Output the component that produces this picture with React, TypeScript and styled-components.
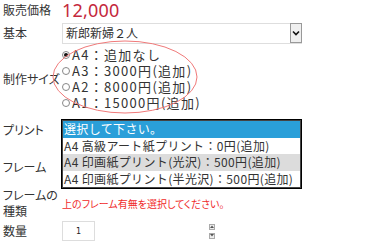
import styled, { createGlobalStyle } from "styled-components";

const GlobalStyle = createGlobalStyle`
  html, body {
    margin: 0;
    padding: 0;
    background: #fff;
  }
  body {
    font-family: "Noto Sans CJK JP", "Noto Sans", sans-serif;
    color: #333;
    font-size: 12px;
  }
`;

const Page = styled.div`
  position: relative;
  width: 376px;
  height: 241px;
  overflow: hidden;
  padding-left: 3px;
  box-sizing: border-box;
`;

const Row = styled.div<{ $h: number }>`
  display: grid;
  grid-template-columns: 59px 1fr;
  align-items: center;
  height: ${(p) => p.$h}px;
`;

const Label = styled.div`
  font-size: 12px;
  line-height: 16px;
  color: #333;
  white-space: nowrap;
  font-feature-settings: "palt";
`;

const Price = styled.div`
  font-family: "Noto Sans", sans-serif;
  font-size: 18px;
  line-height: 20px;
  color: #c4283c;
  letter-spacing: 0.2px;
`;

const SelectBox = styled.div<{ $w: number }>`
  position: relative;
  display: flex;
  align-items: center;
  width: ${(p) => p.$w}px;
  height: 21px;
  box-sizing: border-box;
  border: 1px solid #dedede;
  background: #fff;
  padding-left: 3px;
  font-size: 12px;
`;

const SelectText = styled.span`
  flex: 1;
  line-height: 16px;
`;

const ArrowButton = styled.span`
  display: flex;
  align-items: center;
  justify-content: center;
  width: 12px;
  height: 20px;
  margin-right: -1px;
  box-sizing: border-box;
  border: 1px solid #999;
  background: #efefef;
`;

const RadioList = styled.div`
  display: flex;
  flex-direction: column;
`;

const RadioItem = styled.div`
  display: flex;
  align-items: center;
  height: 16.3px;
  line-height: 16px;
  font-size: 13px;
  letter-spacing: 1.3px;
  color: #333;
  white-space: nowrap;
`;

const RadioDot = styled.span<{ $on?: boolean }>`
  position: relative;
  flex: none;
  width: 8px;
  height: 8px;
  margin-right: 2px;
  border-radius: 50%;
  border: 1px solid #888;
  box-sizing: border-box;
  background: #fff;
  &::after {
    content: "";
    display: ${(p) => (p.$on ? "block" : "none")};
    position: absolute;
    left: 1px;
    top: 1px;
    width: 4px;
    height: 4px;
    border-radius: 50%;
    background: #111;
  }
`;

const Ellipse = styled.svg`
  position: absolute;
  left: 52px;
  top: 40px;
  pointer-events: none;
`;

const Anchor = styled.div`
  position: relative;
  align-self: start;
  margin-top: 7px;
`;

const ListBox = styled.ul`
  position: absolute;
  left: -1px;
  top: 0;
  z-index: 2;
  width: 241px;
  margin: 0;
  list-style: none;
  box-sizing: border-box;
  border: 1px solid #000;
  box-shadow: inset 0 0 0 1px #444;
  background: #fff;
  padding: 1px;
`;

const ListItem = styled.li<{ $kind?: "selected" | "hover" }>`
  height: 16.5px;
  line-height: 16.5px;
  padding-left: 1px;
  font-size: 12px;
  letter-spacing: 0.35px;
  white-space: nowrap;
  background: ${(p) =>
    p.$kind === "selected" ? "#2a9fd9" : p.$kind === "hover" ? "#dcdcdc" : "#fff"};
  color: ${(p) => (p.$kind === "selected" ? "#fff" : "#333")};
`;

const Notice = styled.div`
  font-size: 10px;
  line-height: 14px;
  color: #f02a2a;
  font-feature-settings: "palt";
  padding-top: 2px;
`;

const QtyCell = styled.div`
  display: flex;
  align-items: center;
`;

const QtyInput = styled.div`
  width: 33px;
  height: 20px;
  box-sizing: border-box;
  border: 1px solid #ddd;
  display: flex;
  align-items: center;
  justify-content: center;
  font-family: "DejaVu Sans", sans-serif;
  font-size: 8px;
  color: #222;
`;

const Spinners = styled.div`
  display: flex;
  flex-direction: column;
  gap: 3px;
  margin-left: 114px;
`;

const SpinBtn = styled.span`
  display: flex;
  align-items: center;
  justify-content: center;
  width: 6px;
  height: 6px;
  box-sizing: border-box;
  border: 1px solid #aaa;
  background: #eee;
`;

const sizes = [
  { t: "A4：追加なし", on: true },
  { t: "A3：3000円(追加)" },
  { t: "A2：8000円(追加)" },
  { t: "A1：15000円(追加)" },
];

const prints: { t: string; k?: "selected" | "hover" }[] = [
  { t: "選択して下さい。", k: "selected" },
  { t: "A4 高級アート紙プリント：0円(追加)" },
  { t: "A4 印画紙プリント(光沢)：500円(追加)", k: "hover" },
  { t: "A4 印画紙プリント(半光沢)：500円(追加)" },
];

export default function App() {
  return (
    <Page>
      <GlobalStyle />
      <Row $h={20}>
        <Label>販売価格</Label>
        <Price>12,000</Price>
      </Row>
      <Row $h={26}>
        <Label>基本</Label>
        <SelectBox $w={240}>
          <SelectText>新郎新婦２人</SelectText>
          <ArrowButton>
            <svg width="8" height="6" viewBox="0 0 8 6">
              <path d="M1 1.5 L4 4.5 L7 1.5" fill="none" stroke="#111" strokeWidth="1.6" />
            </svg>
          </ArrowButton>
        </SelectBox>
      </Row>
      <Row $h={66}>
        <Label>制作サイズ</Label>
        <RadioList>
          {sizes.map((s) => (
            <RadioItem key={s.t}>
              <RadioDot $on={s.on} />
              {s.t}
            </RadioItem>
          ))}
        </RadioList>
      </Row>
      <Row $h={36}>
        <Label>プリント</Label>
        <Anchor>
          <SelectBox $w={240} />
          <ListBox>
            {prints.map((p) => (
              <ListItem key={p.t} $kind={p.k}>
                {p.t}
              </ListItem>
            ))}
          </ListBox>
        </Anchor>
      </Row>
      <Row $h={38}>
        <Label>フレーム</Label>
        <div />
      </Row>
      <Row $h={33}>
        <Label>
          フレームの
          <br />
          種類
        </Label>
        <Notice>上のフレーム有無を選択してください。</Notice>
      </Row>
      <Row $h={24}>
        <Label>数量</Label>
        <QtyCell>
          <QtyInput>1</QtyInput>
          <Spinners>
            <SpinBtn>
              <svg width="4" height="3" viewBox="0 0 4 3">
                <path d="M0 3 L2 0.5 L4 3Z" fill="#555" />
              </svg>
            </SpinBtn>
            <SpinBtn>
              <svg width="4" height="3" viewBox="0 0 4 3">
                <path d="M0 0 L2 2.5 L4 0Z" fill="#555" />
              </svg>
            </SpinBtn>
          </Spinners>
        </QtyCell>
      </Row>
      <Ellipse width="146" height="74" viewBox="0 0 146 74">
        <ellipse cx="73" cy="37" rx="72" ry="36" fill="none" stroke="#f07a7a" strokeWidth="1" />
      </Ellipse>
    </Page>
  );
}
